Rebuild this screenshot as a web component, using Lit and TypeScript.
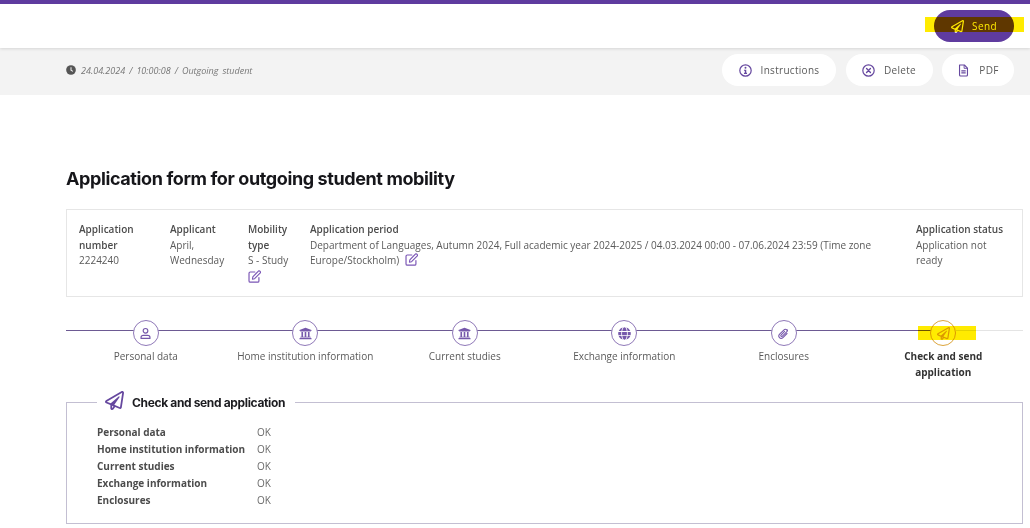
import { LitElement, html, css, svg } from "lit";
import { customElement } from "lit/decorators.js";

const plane = svg`<path d="M440 6.5L24 246.4c-34.4 19.9-31.1 70.8 5.7 85.9L144 379.6V464c0 46.4 59.2 65.5 86.6 28.6l43.8-59.1 111.9 46.2c5.9 2.4 12.1 3.6 18.3 3.6 8.2 0 16.3-2.1 23.6-6.2 12.8-7.2 21.6-20 23.9-34.5l59.4-387.2c6.1-40.1-36.9-68.8-71.5-48.9zM192 464v-64.6l36.6 15.1L192 464zm212.6-28.7l-153.8-63.5L391 169.5c10.7-15.5-9.5-33.5-23.7-21.2L155.8 332.6 48 288 464 48l-59.4 387.3z"/>`;
const bank = svg`<path d="M496 128v16a8 8 0 0 1-8 8h-24v12c0 6.627-5.373 12-12 12H60c-6.627 0-12-5.373-12-12v-12H24a8 8 0 0 1-8-8v-16a8 8 0 0 1 4.941-7.392l232-88a7.996 7.996 0 0 1 6.118 0l232 88A8 8 0 0 1 496 128zm-24 304H40c-13.255 0-24 10.745-24 24v16a8 8 0 0 0 8 8h464a8 8 0 0 0 8-8v-16c0-13.255-10.745-24-24-24zM96 192v192H60c-6.627 0-12 5.373-12 12v20h416v-20c0-6.627-5.373-12-12-12h-36V192h-64v192h-64V192h-64v192h-64V192H96z"/>`;
const globe = svg`<path transform="translate(8 0)" d="M336.5 160C322 70.7 287.8 8 248 8s-74 62.7-88.5 152h177zM152 256c0 22.2 1.2 43.5 3.3 64h185.3c2.1-20.5 3.3-41.8 3.3-64s-1.2-43.5-3.3-64H155.3c-2.1 20.5-3.3 41.8-3.3 64zm324.7-96c-28.6-67.9-86.5-120.4-158-141.6 24.4 33.8 41.2 84.7 50 141.6h108zM177.2 18.4C105.8 39.6 47.8 92.1 19.3 160h108c8.7-56.9 25.5-107.8 49.9-141.6zM487.4 192H372.7c2.1 21 3.3 42.5 3.3 64s-1.2 43-3.3 64h114.6c5.5-20.5 8.6-41.8 8.6-64s-3.1-43.5-8.5-64zM120 256c0-21.5 1.2-43 3.3-64H8.6C3.2 212.5 0 233.8 0 256s3.2 43.5 8.6 64h114.6c-2-21-3.2-42.5-3.2-64zm39.5 96c14.5 89.3 48.7 152 88.5 152s74-62.7 88.5-152h-177zm159.3 141.6c71.4-21.2 129.4-73.7 158-141.6h-108c-8.8 56.9-25.6 107.8-50 141.6zM19.3 352c28.6 67.9 86.5 120.4 158 141.6-24.4-33.8-41.2-84.7-50-141.6h-108z"/>`;
const user = svg`<circle cx="256" cy="150" r="92" fill="none" stroke="currentColor" stroke-width="46"/><path d="M80 450v-40c0-50 40-80 90-80h172c50 0 90 30 90 80v40z" fill="none" stroke="currentColor" stroke-width="46" stroke-linejoin="round"/>`;
const clip = svg`<path d="M390 120c-36-36-88-36-124 0L112 274c-50 50-50 110-14 146s96 36 146 -14l150-150" fill="none" stroke="currentColor" stroke-width="42" stroke-linecap="round"/><path d="M300 170L164 306c-22 22-22 44-8 58s36 14 58-8l176-176c30-30 30-50 0-70" fill="none" stroke="currentColor" stroke-width="42" stroke-linecap="round"/>`;
const info = svg`<circle cx="256" cy="256" r="224" fill="none" stroke="currentColor" stroke-width="48"/><circle cx="256" cy="150" r="38"/><path d="M196 222h90v124h30v44H196v-44h34v-80h-34z"/>`;
const cross = svg`<circle cx="256" cy="256" r="224" fill="none" stroke="currentColor" stroke-width="48"/><path d="M180 180l152 152M332 180L180 332" fill="none" stroke="currentColor" stroke-width="54" stroke-linecap="round"/>`;
const file = svg`<path d="M100 40h190l122 122v270c0 22-18 40-40 40H140c-22 0-40-18-40-40z" fill="none" stroke="currentColor" stroke-width="44" stroke-linejoin="round"/><path d="M280 40v130h130" fill="none" stroke="currentColor" stroke-width="36"/><path d="M170 270h172M170 350h172" fill="none" stroke="currentColor" stroke-width="44"/>`;
const clock = svg`<circle cx="256" cy="256" r="248"/><path d="M256 110v156l100 62" fill="none" stroke="#f3f3f3" stroke-width="52"/>`;
const edit = svg`<path d="M430 300v130c0 30-22 50-50 50H90c-30 0-50-22-50-50V130c0-30 22-50 50-50h180" fill="none" stroke="currentColor" stroke-width="46" stroke-linecap="round"/><path d="M190 270L410 40c14-14 34-14 48 0l26 26c14 14 14 34 0 48L260 344l-84 16z" fill="none" stroke="currentColor" stroke-width="44" stroke-linejoin="round"/>`;

const ico = (body: unknown, cls = "") =>
  html`<svg class="ico ${cls}" viewBox="0 0 512 512" fill="currentColor" aria-hidden="true">${body}</svg>`;

const steps: [string, unknown, boolean][] = [
  ["Personal data", user, false],
  ["Home institution information", bank, false],
  ["Current studies", bank, false],
  ["Exchange information", globe, false],
  ["Enclosures", clip, false],
  ["Check and send application", plane, true],
];
const rows = ["Personal data", "Home institution information", "Current studies", "Exchange information", "Enclosures"];

@customElement("app-root")
export class AppRoot extends LitElement {
  static styles = css`
    :host {
      display: block;
      position: relative;
      height: 528px;
      overflow: hidden;
      background: #fff;
      font-family: "Open Sans", sans-serif;
      font-size: 10px;
      color: #5a5a5a;
    }
    .ico { display: block; width: 12px; height: 12px; flex: none; color: #66489f; }
    .top {
      display: flex;
      justify-content: flex-end;
      align-items: center;
      height: 44px;
      border-top: 4px solid #5f3b9f;
      padding-right: 16px;
      box-shadow: 0 1px 3px rgba(0,0,0,.12);
      position: relative;
    }
    .send {
      display: flex;
      align-items: center;
      gap: 8px;
      width: 80px;
      height: 32px;
      box-sizing: border-box;
      padding-left: 17px;
      border-radius: 16px;
      background: #5f3b9f;
      color: #fff;
      letter-spacing: .4px;
    }
    .send .ico { color: #fff; width: 13px; height: 13px; }
    .tools {
      display: flex;
      align-items: center;
      height: 47px;
      box-sizing: border-box;
      background: #f3f3f3;
      padding: 0 16px 3px 66px;
      gap: 9.5px;
    }
    .meta {
      flex: 1;
      display: flex;
      align-items: center;
      gap: 5px;
      font-size: 9px;
      font-style: italic;
      color: #777;
      word-spacing: 1.7px;
    }
    .meta .ico { width: 10px; height: 10px; color: #555; }
    .pill {
      display: flex;
      align-items: center;
      justify-content: center;
      gap: 9px;
      height: 32px;
      border-radius: 16px;
      background: #fff;
      letter-spacing: .3px;
      color: #5a5a5a;
    }
    .pill .ico { width: 13px; height: 13px; }
    .p1 { width: 114px; }
    .p2 { width: 87px; }
    .p3 { width: 72px; }
    main { padding: 0 7px 0 66px; }
    h1 {
      margin: 72px 0 0;
      height: 24px;
      line-height: 24px;
      font-family: Inter, sans-serif;
      font-size: 18px;
      font-weight: 700;
      letter-spacing: -.39px;
      color: #16161a;
    }
    .card {
      display: flex;
      margin-top: 18px;
      height: 88px;
      box-sizing: border-box;
      border: 1px solid #e6e6e6;
      padding: 12px;
      line-height: 15.6px;
    }
    .card > div { flex: none; }
    .card b { display: block; font-weight: 600; color: #4c4c4c; }
    .c1 { width: 91px; }
    .c2 { width: 78px; }
    .c3 { width: 62px; }
    .c4 { width: 606px; padding-right: 40px; box-sizing: border-box; }
    .c5 { width: 92px; }
    .inl { display: inline-block; vertical-align: -2px; width: 13px; height: 13px; margin-left: 3px; }
    .inl .ico { color: #7a55b5; width: 13px; height: 13px; }
    .blk { margin-top: 1px; }
    .blk .ico { color: #7a55b5; width: 13px; height: 13px; }
    .stepper {
      display: grid;
      grid-template-columns: repeat(6, 1fr);
      margin-top: 24px;
      height: 71px;
      position: relative;
      text-align: center;
      line-height: 15.6px;
    }
    .stepper::before {
      content: "";
      position: absolute;
      left: 0; top: 9px;
      width: 866px;
      height: 1px;
      background: #6d5a93;
    }
    .stepper::after {
      content: "";
      position: absolute;
      left: 890px; right: 0; top: 9px;
      height: 1px;
      background: #e4e4e4;
    }
    .step { display: flex; flex-direction: column; align-items: center; }
    .dot {
      display: flex;
      align-items: center;
      justify-content: center;
      width: 26px;
      height: 26px;
      box-sizing: border-box;
      margin-top: -1px;
      margin-bottom: 3px;
      border: 1px solid #8f78b8;
      border-radius: 50%;
      background: #fff;
      position: relative;
      z-index: 1;
    }
    .dot .ico { width: 13px; height: 13px; color: #7658ab; }
    .step.on { font-weight: 700; color: #333; width: 100px; justify-self: center; }
    .step.on .dot { border-color: #dca53c; }
    .step.on .dot .ico { color: #dca53c; }
    fieldset {
      margin: 0;
      padding: 0 0 0 30px;
      height: 132px;
      box-sizing: border-box;
      border: 1px solid #c3bfd2;
    }
    legend {
      display: flex;
      align-items: center;
      gap: 8px;
      margin-left: 0;
      padding: 0 10px 0 8px;
      height: 20px;
      font-family: Inter, sans-serif;
      font-size: 12px;
      font-weight: 700;
      letter-spacing: -.35px;
      color: #1c1c20;
    }
    legend .ico { width: 19px; height: 19px; margin-top: -4px; }
    .list {
      display: grid;
      grid-template-columns: max-content max-content;
      column-gap: 12px;
      margin-top: 12px;
      line-height: 17px;
    }
    .list b { font-weight: 700; color: #4c4c4c; }
    .list span { color: #6a6a6a; }
    .mark {
      position: absolute;
      background: #ffeb00;
      mix-blend-mode: multiply;
      z-index: 5;
    }
    .m1 { left: 925px; top: 17px; width: 99px; height: 15px; }
    .m2 { left: 918px; top: 326px; width: 58px; height: 14px; }
  `;

  render() {
    return html`
      <header class="top">
        <div class="send">${ico(plane)}<span>Send</span></div>
      </header>
      <div class="tools">
        <div class="meta">${ico(clock)}<span>24.04.2024 / 10:00:08 / Outgoing student</span></div>
        <div class="pill p1">${ico(info)}<span>Instructions</span></div>
        <div class="pill p2">${ico(cross)}<span>Delete</span></div>
        <div class="pill p3">${ico(file)}<span>PDF</span></div>
      </div>
      <main>
        <h1>Application form for outgoing student mobility</h1>
        <section class="card">
          <div class="c1"><b>Application number</b>2224240</div>
          <div class="c2"><b>Applicant</b>April, Wednesday</div>
          <div class="c3"><b>Mobility type</b>S - Study<div class="blk">${ico(edit)}</div></div>
          <div class="c4"><b>Application period</b>Department of Languages, Autumn 2024, Full academic year 2024-2025 / 04.03.2024 00:00 - 07.06.2024 23:59 (Time zone Europe/Stockholm) <span class="inl">${ico(edit)}</span></div>
          <div class="c5"><b>Application status</b>Application not ready</div>
        </section>
        <nav class="stepper">
          ${steps.map(
            ([t, i, on]) => html`<div class="step ${on ? "on" : ""}"><div class="dot">${ico(i)}</div><span>${t}</span></div>`
          )}
        </nav>
        <fieldset>
          <legend>${ico(plane)}<span>Check and send application</span></legend>
          <div class="list">
            ${rows.map((r) => html`<b>${r}</b><span>OK</span>`)}
          </div>
        </fieldset>
      </main>
      <div class="mark m1"></div>
      <div class="mark m2"></div>
    `;
  }
}
